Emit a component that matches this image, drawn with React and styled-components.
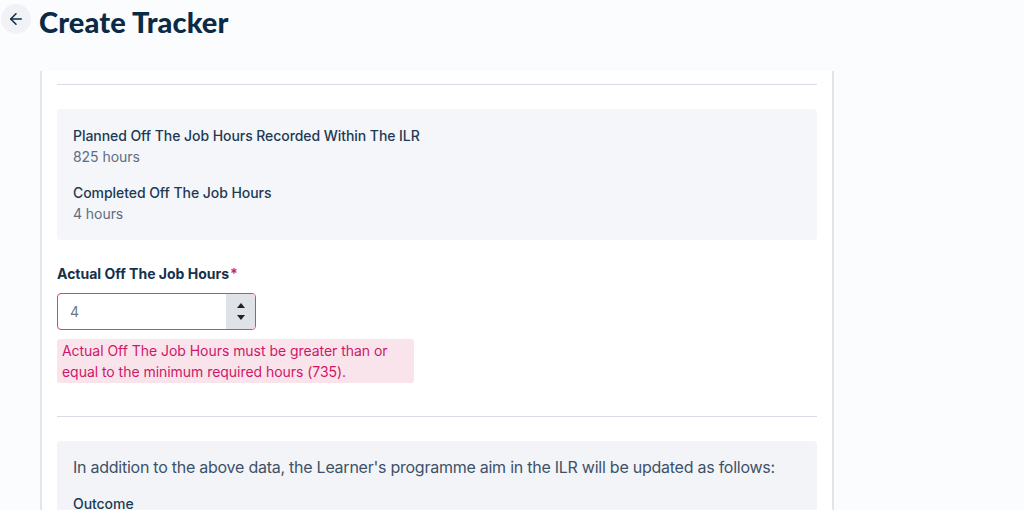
import React from 'react';
import styled, { createGlobalStyle } from 'styled-components';

const GlobalStyle = createGlobalStyle`
  body {
    margin: 0;
    background: #fbfcfe;
    font-family: 'Inter', 'Noto Sans', sans-serif;
    color: #1d3a55;
  }
`;

const Page = styled.div`
  width: 1024px;
  height: 510px;
  overflow: hidden;
`;

const Header = styled.div`
  display: flex;
  align-items: flex-start;
  gap: 8px;
  padding: 4px 0 0 1px;
  height: 30px;
`;

const BackButton = styled.button`
  width: 30px;
  height: 30px;
  flex-shrink: 0;
  border-radius: 50%;
  border: none;
  background: #f0f2f6;
  color: #0b2a45;
  display: flex;
  align-items: center;
  justify-content: center;
  padding: 0;
  cursor: pointer;
`;

const Title = styled.h1`
  margin: 0;
  padding-top: 1px;
  font-family: 'Lato', sans-serif;
  font-weight: 900;
  font-size: 29px;
  line-height: 34px;
  letter-spacing: 0.1px;
  color: #0b2a45;
`;

const Card = styled.div`
  margin: 37px 0 0 40px;
  width: 794px;
  box-sizing: border-box;
  background: #ffffff;
  border-left: 2px solid #e1e5ec;
  border-right: 2px solid #e1e5ec;
  padding: 13px 15px 0;
  height: 500px;
`;

const Divider = styled.div`
  height: 1px;
  background: #d8dce6;
  margin-top: ${(p) => p.$top || 0}px;
`;

const InfoBox = styled.div`
  margin-top: 24px;
  background: ${(p) => p.$bg || '#f5f6fa'};
  border-radius: 4px;
  padding: 16px;
  display: flex;
  flex-direction: column;
  gap: ${(p) => p.$gap ?? 15}px;
`;

const Item = styled.div`
  display: flex;
  flex-direction: column;
  font-size: 14px;
  line-height: 21px;
  letter-spacing: -0.06px;
`;

const ItemLabel = styled.span`
  font-weight: 500;
  color: #1d3a55;
`;

const ItemValue = styled.span`
  color: #5f6d80;
`;

const FieldLabel = styled.label`
  display: block;
  margin-top: 24px;
  font-size: 14px;
  line-height: 20px;
  font-weight: 700;
  color: #15314b;
`;

const Required = styled.span`
  color: #d21f6c;
  margin-left: 1px;
`;

const InputWrap = styled.div`
  margin-top: 9px;
  width: 199px;
  height: 37px;
  box-sizing: border-box;
  border: 1px solid #d9475e;
  border-radius: 4px;
  display: flex;
  overflow: hidden;
  background: #fff;
`;

const NumberInput = styled.input`
  flex: 1;
  min-width: 0;
  border: none;
  outline: none;
  padding: 0 12px;
  font-family: 'Inter', sans-serif;
  font-size: 14px;
  color: #6b7686;
  background: transparent;
`;

const Spinner = styled.div`
  width: 29px;
  background: #dfe2e7;
  display: flex;
  flex-direction: column;
  align-items: center;
  justify-content: center;
  gap: 7px;
`;

const Arrow = styled.span`
  width: 0;
  height: 0;
  border-left: 4px solid transparent;
  border-right: 4px solid transparent;
  ${(p) => (p.$up ? 'border-bottom: 5px solid #222;' : 'border-top: 5px solid #222;')}
`;

const ErrorBox = styled.div`
  margin-top: 9px;
  width: 357px;
  box-sizing: border-box;
  padding: 1px 5px;
  background: #fae4ec;
  border-radius: 3px;
  color: #cf1668;
  font-size: 14px;
  line-height: 21px;
  letter-spacing: -0.04px;
`;

const Intro = styled.p`
  margin: 0;
  font-size: 16px;
  line-height: 20px;
  letter-spacing: -0.25px;
  color: #3d5167;
`;

const App = () => (
  <Page>
    <GlobalStyle />
    <Header>
      <BackButton aria-label="Back">
        <svg width="18" height="18" viewBox="0 0 24 24" fill="none" stroke="currentColor" strokeWidth="2" strokeLinecap="round" strokeLinejoin="round">
          <path d="M19 12H5" />
          <path d="M12 19l-7-7 7-7" />
        </svg>
      </BackButton>
      <Title>Create Tracker</Title>
    </Header>

    <Card>
      <Divider />
      <InfoBox>
        <Item>
          <ItemLabel>Planned Off The Job Hours Recorded Within The ILR</ItemLabel>
          <ItemValue>825 hours</ItemValue>
        </Item>
        <Item>
          <ItemLabel>Completed Off The Job Hours</ItemLabel>
          <ItemValue>4 hours</ItemValue>
        </Item>
      </InfoBox>

      <FieldLabel>
        Actual Off The Job Hours<Required>*</Required>
      </FieldLabel>
      <InputWrap>
        <NumberInput type="text" defaultValue="4" />
        <Spinner>
          <Arrow $up />
          <Arrow />
        </Spinner>
      </InputWrap>
      <ErrorBox>
        Actual Off The Job Hours must be greater than or equal to the minimum required hours (735).
      </ErrorBox>

      <Divider $top={33} />
      <InfoBox $bg="#f3f4f8" $gap={16}>
        <Intro>In addition to the above data, the Learner's programme aim in the ILR will be updated as follows:</Intro>
        <Item>
          <ItemLabel>Outcome</ItemLabel>
        </Item>
      </InfoBox>
    </Card>
  </Page>
);

export default App;
